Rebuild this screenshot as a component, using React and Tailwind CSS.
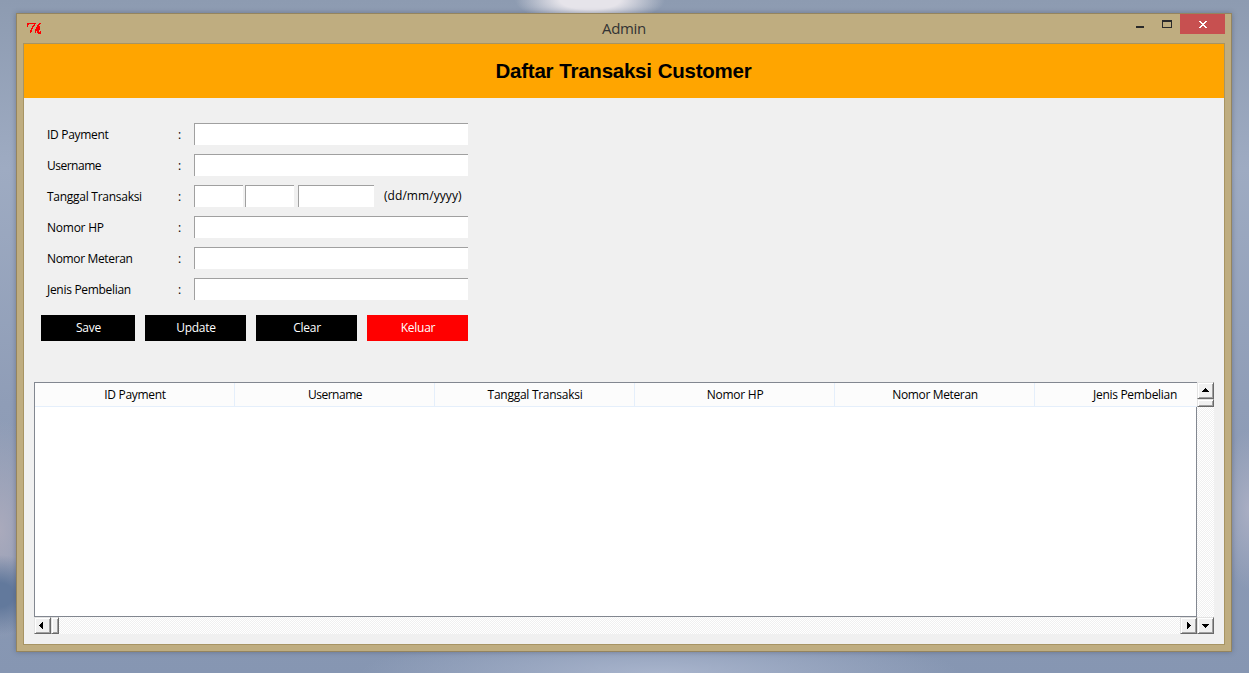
import React from "react";

const inset = "bg-white border-t border-l border-[#a0a0a0] h-[22px] outline-none block";
const uiFont = "font-['Open_Sans','Noto_Sans',sans-serif]";
const raised =
  "bg-[#f0f0f0] shrink-0 flex items-center justify-center border-t border-l border-t-[#e3e3e3] border-l-[#e3e3e3] border-r border-b border-r-[#696969] border-b-[#696969] shadow-[inset_1px_1px_0_#ffffff,inset_-1px_-1px_0_#a0a0a0]";
const trough =
  "bg-[conic-gradient(#ffffff_25%,#f0f0f0_0_50%,#ffffff_0_75%,#f0f0f0_0)] bg-[length:2px_2px]";

const arrows = {
  up: "M3 0h1v1h1v1h1v1h1v1H0V3h1V2h1V1h1z",
  down: "M0 0h7v1H6v1H5v1H4v1H3V3H2V2H1V1H0z",
  left: "M3 0h1v7H3V6H2V5H1V4H0V3h1V2h1V1h1z",
  right: "M0 0h1v1h1v1h1v1h1v1H3v1H2v1H1v1H0z",
};

function Arrow({ dir }) {
  const vertical = dir === "up" || dir === "down";
  return (
    <svg width={vertical ? 7 : 4} height={vertical ? 4 : 7} shapeRendering="crispEdges" aria-hidden="true">
      <path d={arrows[dir]} fill="#000" />
    </svg>
  );
}

function Row({ label, tracking, children }) {
  return (
    <div className="flex h-[22px] items-center">
      <label className={`w-[131px] whitespace-nowrap pt-px ${tracking}`}>{label}</label>
      <span className="w-4 pt-px">:</span>
      {children}
    </div>
  );
}

function TkIcon() {
  return (
    <svg width="16" height="13" viewBox="0 0 16 13" className="mt-2 ml-[9px]" fill="none" stroke="#ff0000" shapeRendering="crispEdges" aria-hidden="true">
      <path d="M1.5 4.5V2.5L3 1.5H9.5" strokeWidth="1.7" />
      <path d="M8.5 2.5L6.5 5.5L5 8.5L4.5 11.5" strokeWidth="1.6" />
      <path d="M14.5 1L12 4L9.5 8.5V11" strokeWidth="1.7" />
      <path d="M10.5 7.5L13.5 5.2V7.5L11 8.5L12.5 10.8H14.5V9" strokeWidth="1.7" />
    </svg>
  );
}

const columns = [
  ["ID Payment", "tracking-[-0.3px]"],
  ["Username", "tracking-[-0.5px]"],
  ["Tanggal Transaksi", "tracking-[-0.27px]"],
  ["Nomor HP", "tracking-[-0.24px]"],
  ["Nomor Meteran", "tracking-[-0.35px]"],
  ["Jenis Pembelian", "tracking-[-0.3px]"],
];

const buttons = [
  ["Save", "w-[94px] bg-black"],
  ["Update", "w-[101px] bg-black"],
  ["Clear", "w-[101px] bg-black"],
  ["Keluar", "w-[101px] bg-[#ff0000]"],
];

export default function App() {
  return (
    <div className="h-[673px] w-[1249px] overflow-hidden pt-[13px] pl-4 bg-[radial-gradient(ellipse_75px_24px_at_590px_0px,#e6e4ea_40%,transparent),radial-gradient(ellipse_45px_40px_at_0px_595px,#62799c_30%,transparent),radial-gradient(ellipse_50px_110px_at_0px_530px,#aaaabc,transparent),radial-gradient(ellipse_30px_80px_at_1249px_510px,#a9aec3,transparent),radial-gradient(ellipse_300px_40px_at_660px_673px,#a8b4cc,transparent),linear-gradient(180deg,#8d9bb1_0%,#9eabc2_25%,#8f9db7_60%,#8696b2_100%)]">
      <div className={`flex h-[639px] w-[1216px] flex-col border border-[#94845f] bg-[#bfad80] shadow-[0_0_5px_rgba(40,50,70,0.35)] ${uiFont}`}>
        <div className="flex h-[29px] items-start">
          <div className="w-[160px]"><TkIcon /></div>
          <div className="flex-1 pt-1 pl-[50px] text-center text-[15px] leading-5 tracking-[-0.3px] text-[#333]">Admin</div>
          <div className="flex w-[210px] items-start justify-end pr-1.5">
            <div className="mt-3 mr-[18px] h-0.5 w-2 bg-[#2a2a2a]" />
            <div className="mt-1.5 mr-2 h-2 w-2.5 border border-t-2 border-[#2a2a2a]" />
            <button className="flex h-5 w-[45px] items-center justify-center bg-[#c75050]">
              <svg width="8" height="7" viewBox="0 0 8 7" shapeRendering="crispEdges" aria-hidden="true">
                <path d="M0 0h2v1h1v1h2V1h1V0h2v1H7v1H6v1H5v1h1v1h1v1h1v1H6V6H5V5H3v1H2v1H0V6h1V5h1V4h1V3H2V2H1V1H0z" fill="#fff" />
              </svg>
            </button>
          </div>
        </div>
        <div className="ml-1.5 flex h-[602px] w-[1202px] flex-col border border-[#a79463] bg-[#f0f0f0] text-[12px] leading-4 text-black">
          <h1 className="flex h-[54px] shrink-0 items-center justify-center bg-[#ffa500] pr-px font-['Liberation_Sans',Arial,sans-serif] text-[20.5px] font-bold tracking-[-0.24px] [word-spacing:0.5px]">
            Daftar Transaksi Customer
          </h1>
          <div className="flex flex-col gap-[9px] pt-[25px] pl-[23px]">
            <Row label="ID Payment" tracking="tracking-[-0.3px]"><input className={`${inset} w-[274px]`} /></Row>
            <Row label="Username" tracking="tracking-[-0.5px]"><input className={`${inset} w-[274px]`} /></Row>
            <Row label="Tanggal Transaksi" tracking="tracking-[-0.27px]">
              <input className={`${inset} w-[49px]`} />
              <input className={`${inset} ml-0.5 w-[49px]`} />
              <input className={`${inset} ml-1 w-[76px]`} />
              <span className="ml-2.5 whitespace-nowrap tracking-[0.06px]">(dd/mm/yyyy)</span>
            </Row>
            <Row label="Nomor HP" tracking="tracking-[-0.24px]"><input className={`${inset} w-[274px]`} /></Row>
            <Row label="Nomor Meteran" tracking="tracking-[-0.35px]"><input className={`${inset} w-[274px]`} /></Row>
            <Row label="Jenis Pembelian" tracking="tracking-[-0.3px]"><input className={`${inset} w-[274px]`} /></Row>
          </div>
          <div className="mt-[15px] ml-[17px] flex gap-2.5">
            {buttons.map(([t, c]) => (
              <button key={t} className={`h-[26px] pl-px tracking-[-0.25px] text-white ${c}`}>{t}</button>
            ))}
          </div>
          <div className="mt-[41px] ml-2.5 flex h-[252px] w-[1180px]">
            <div className="flex w-[1163px] flex-col">
              <div className="flex h-[235px] flex-col border-t border-b border-l border-[#828790] bg-white">
                <div className="flex h-6 shrink-0 overflow-hidden border-b border-[#e5effb] bg-[#fcfcfc]">
                  {columns.map(([t, c]) => (
                    <div key={t} className={`flex w-[200px] shrink-0 items-center justify-center border-r border-[#e5effb] pl-px ${c}`}>{t}</div>
                  ))}
                </div>
                <div className="flex-1 border-r border-[#828790]" />
              </div>
              <div className={`flex h-[17px] ${trough}`}>
                <div className={`${raised} w-[17px] pr-[3px]`}><Arrow dir="left" /></div>
                <div className={`${raised} w-2`} />
                <div className="flex-1" />
                <div className={`${raised} w-[17px]`}><Arrow dir="right" /></div>
              </div>
            </div>
            <div className={`flex w-[17px] flex-col ${trough}`}>
              <div className={`${raised} h-[17px] pb-0.5`}><Arrow dir="up" /></div>
              <div className={`${raised} h-2`} />
              <div className="flex-1" />
              <div className={`${raised} h-[17px]`}><Arrow dir="down" /></div>
            </div>
          </div>
        </div>
      </div>
    </div>
  );
}
